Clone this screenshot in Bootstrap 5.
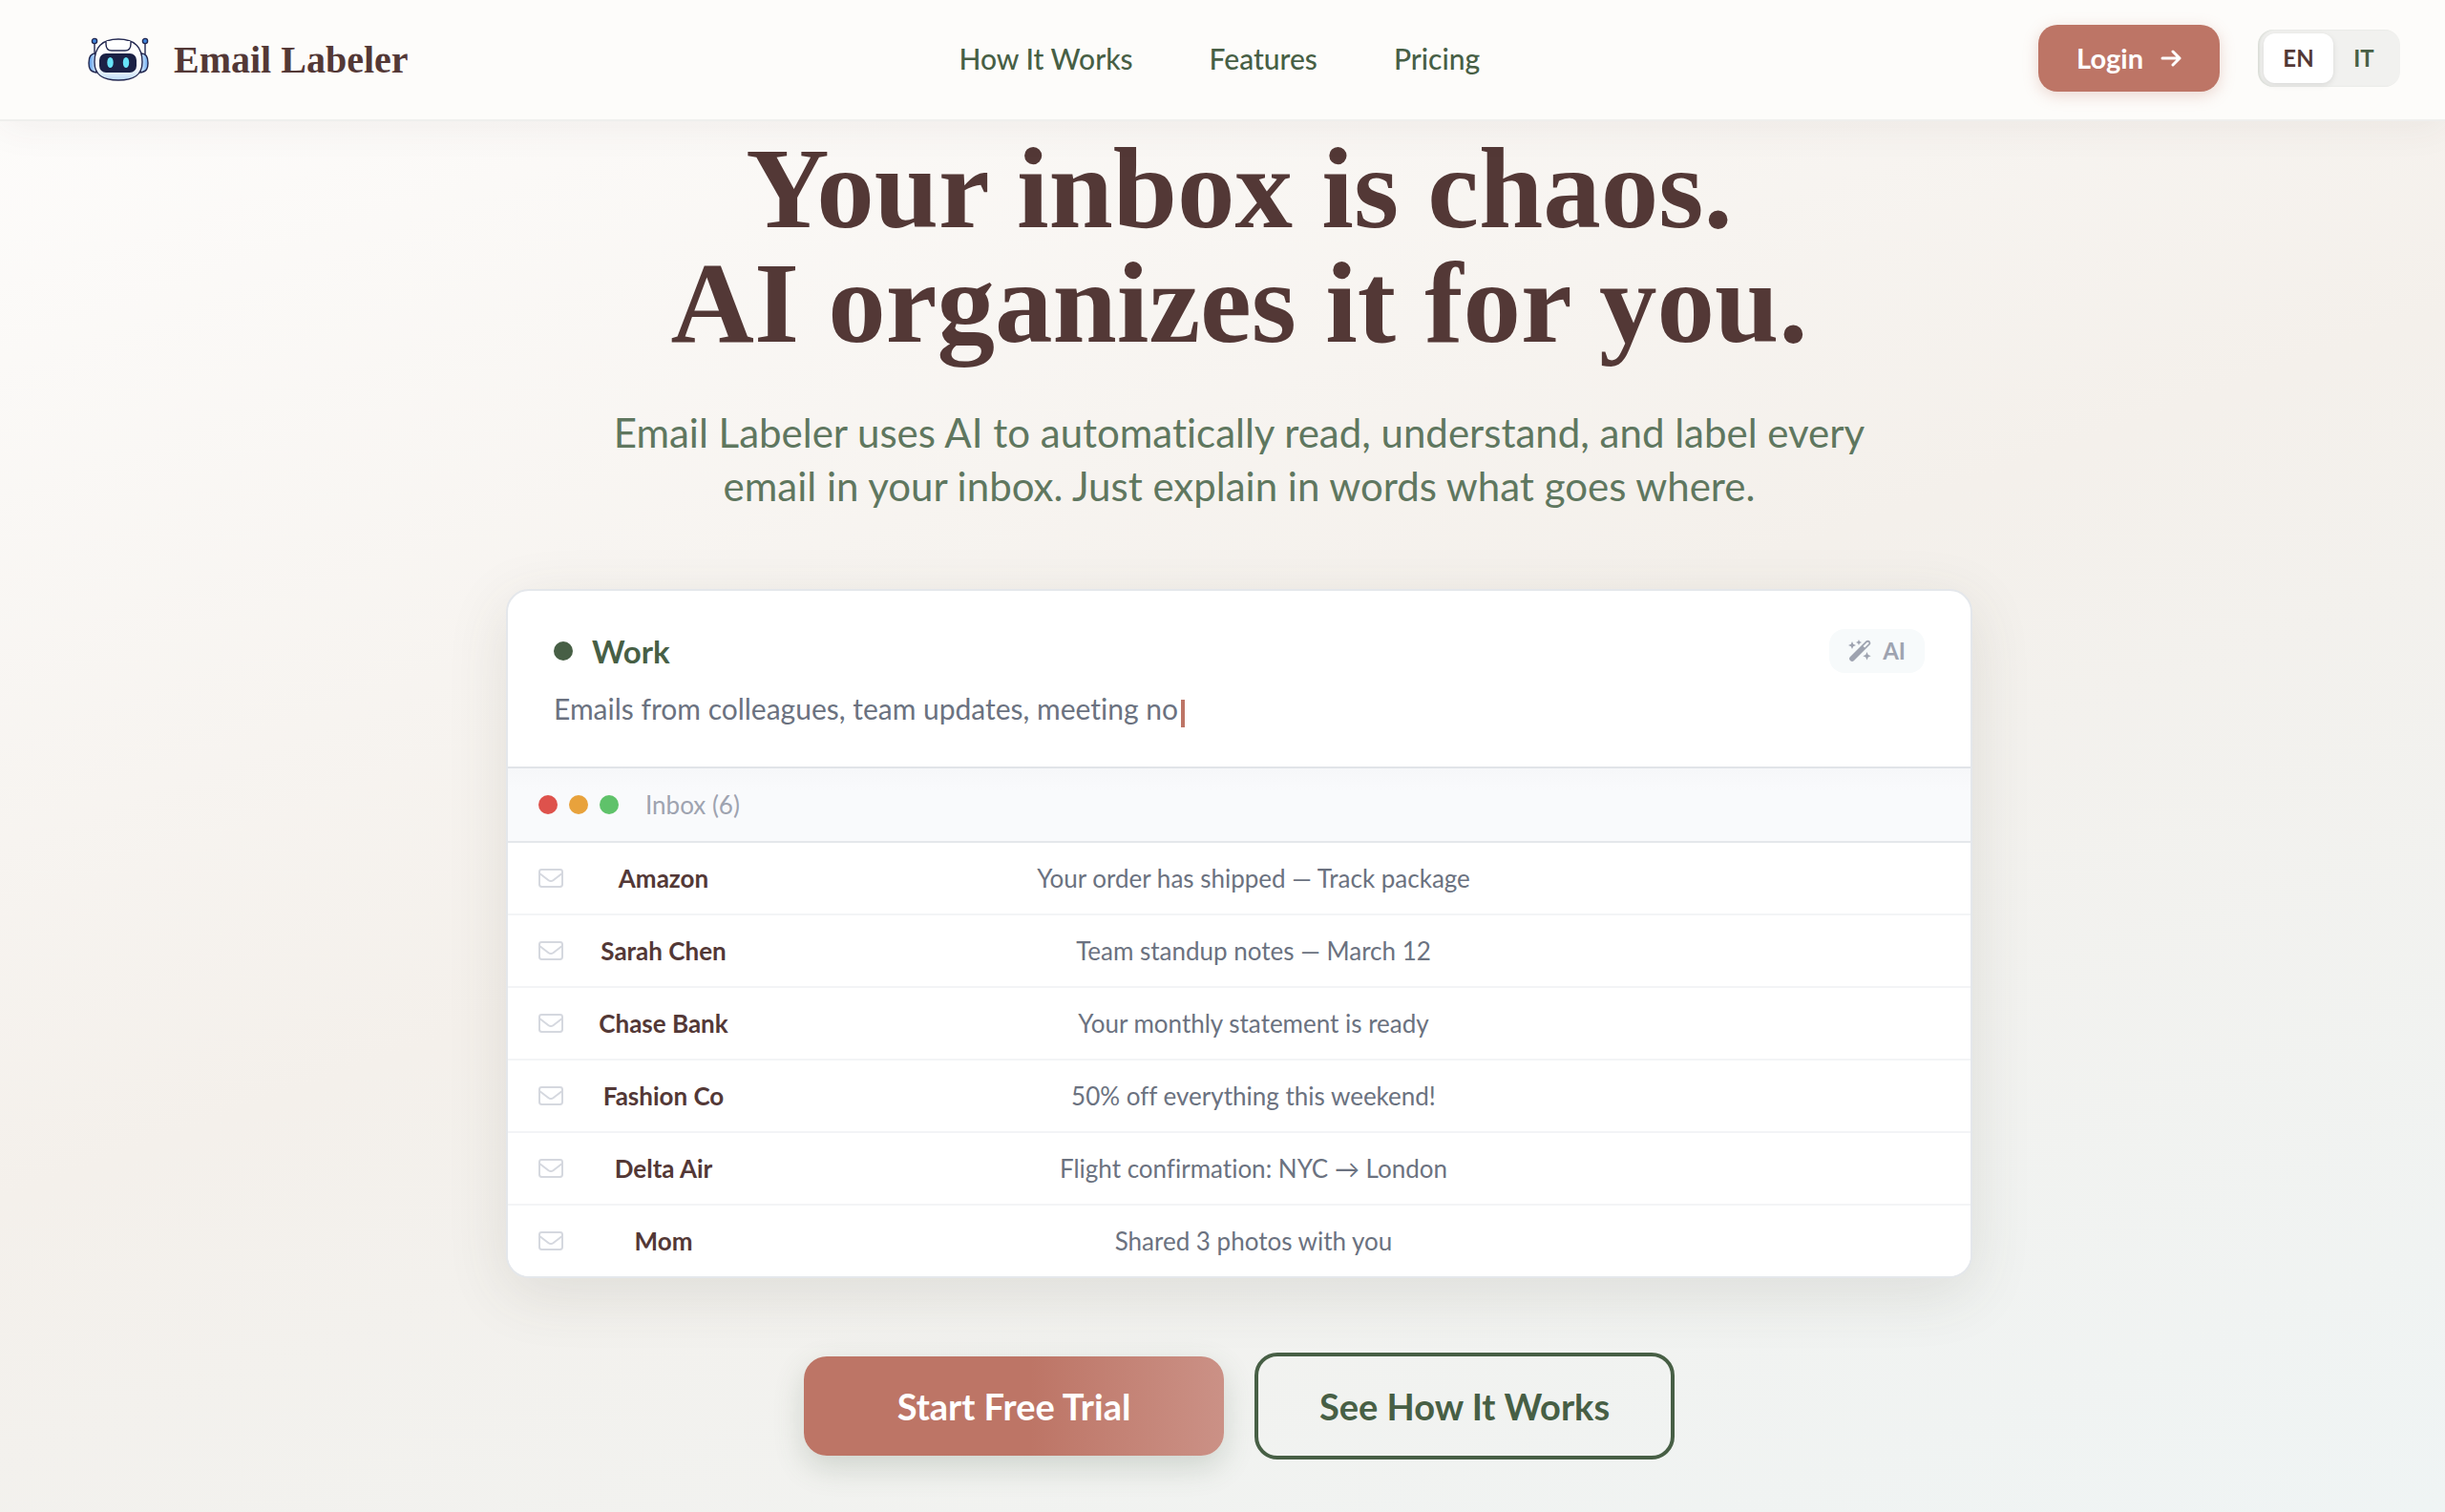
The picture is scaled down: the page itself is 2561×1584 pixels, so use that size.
<!DOCTYPE html>
<html lang="en">
<head>
<meta charset="utf-8">
<meta name="viewport" content="width=device-width, initial-scale=1">
<title>Email Labeler</title>
<link href="https://cdn.jsdelivr.net/npm/bootstrap@5.3.0/dist/css/bootstrap.min.css" rel="stylesheet">
<style>
  :root {
    --brown: #533836;
    --green: #475f45;
    --clay: #bd7566;
    --slate: #6b7280;
    --mist: #9ea3b0;
    --line: #e4e7eb;
  }
  body {
    min-height: 100vh;
    font-family: Lato, "Open Sans", sans-serif;
    font-size: 26px;
    line-height: 30px;
    font-variant-ligatures: no-common-ligatures;
    color: var(--brown);
    background: linear-gradient(160deg, #fefdfc 0%, #f4f0eb 50%, #eff4f4 100%) no-repeat;
  }
  .serif-face { font-family: "Liberation Serif", serif; font-weight: 700; color: var(--brown); }

  .topbar {
    height: 127px;
    padding: 0 47px 4px 92px;
    background: #fdfcfa;
    border-bottom: 2px solid #efefed;
    box-shadow: 0 4px 40px rgba(83, 56, 54, .07);
  }
  .brand-link { gap: 26px; padding-top: 4px; }
  .brand-text { font-size: 40px; line-height: 48px; }
  .main-nav { gap: 80px; }
  .main-nav .nav-link { font-size: 30px; line-height: 36px; color: var(--green); font-weight: 500; padding: 0; }
  .topbar-side { gap: 40px; }
  .btn-login {
    height: 70px; padding: 0 40px; border: 0; border-radius: 20px; gap: 18px;
    color: #fff; background: var(--clay); font-size: 29px; font-weight: 700;
    box-shadow: 0 4px 16px rgba(189, 117, 102, .28);
  }
  .btn-login:hover { color: #fff; background: #b06a5c; }
  .lang-switch { height: 60px; padding: 4px 6px; border-radius: 16px; background: #f1f1ef; box-shadow: inset 2px 0 2px rgba(71, 95, 69, .12); }
  .lang-switch button { height: 52px; border: 0; border-radius: 12px; background: transparent; color: var(--green); font-size: 24px; font-weight: 700; width: 64px; padding: 0; }
  .lang-switch .chosen { width: 73px; background: #fff; color: var(--brown); box-shadow: 0 2px 6px rgba(0, 0, 0, .1); }

  .hero { padding: 10px 0 50px 35px; }
  .hero-title { font-size: 121px; line-height: 120px; }
  .hero-copy { font-size: 42px; line-height: 56px; color: #5f775f; max-width: 1400px; margin-top: 48px; }

  .demo-card {
    width: 1536px; max-width: 100%; margin-top: 80px;
    border: 2px solid var(--line); border-radius: 24px; background: #fff;
    box-shadow: 0 16px 64px rgba(71, 72, 60, .12);
  }
  .rule-head { padding: 40px 48px 38px; }
  .rule-title { gap: 20px; }
  .rule-dot, .win-dot { width: 20px; height: 20px; border-radius: 50%; flex: none; }
  .rule-dot { background: var(--green); }
  .win-close { background: #de524c; }
  .win-min { background: #e8a23c; }
  .win-max { background: #5fc26a; }
  .rule-name { font-size: 33px; line-height: 46px; font-weight: 700; color: var(--green); }
  .ai-chip { height: 46px; padding: 0 20px; gap: 12px; border-radius: 16px; background: #f7fafb; color: var(--mist); font-size: 24px; font-weight: 700; }
  .rule-text { font-size: 30px; line-height: 46px; color: var(--slate); margin-top: 14px; }
  .caret { display: inline-block; width: 4px; height: 29px; margin-left: 3px; vertical-align: -8px; background: var(--clay); }
  .inbox-bar { padding: 23px 32px; gap: 12px; border-top: 2px solid #e1e4e8; border-bottom: 2px solid var(--line); background: linear-gradient(#f6f7f9, #f9fafc 30%); color: var(--mist); }
  .list-group-flush > .mail-row { padding: 22px 32px; gap: 24px; border: 0; border-bottom: 2px solid #f3f4f6; text-align: center; }
  .list-group-flush > .mail-row:last-child { border-bottom: 0; }
  .mail-icon { color: #d5d8df; }
  .mail-from { width: 162px; font-weight: 700; color: var(--brown); }
  .mail-tag { width: 182px; }
  .mail-subject { color: var(--slate); }

  .cta-row { margin-top: 78px; gap: 32px; }
  .btn-cta { width: 440px; border-radius: 24px; font-size: 38px; line-height: 44px; font-weight: 700; padding: 30px 0; }
  .btn-start { border: 0; color: #fff; background: linear-gradient(90deg, #bd7566 54%, #cb9186 100%); box-shadow: 0 12px 32px rgba(71, 95, 69, .2); }
  .btn-start:hover { color: #fff; background: var(--clay); }
  .btn-how { border: 4px solid var(--green); color: var(--green); }
  .btn-how:hover { color: #fff; background: var(--green); }
</style>
</head>
<body>

<svg class="d-none" aria-hidden="true">
  <symbol id="mail" viewBox="0 0 26 20">
    <rect x="1" y="1" width="24" height="18" rx="2.4" fill="none" stroke="currentColor" stroke-width="2"/>
    <path d="M1.500 5.200 10.600 12.200Q13 14 15.400 12.200L24.500 5.200" fill="none" stroke="currentColor" stroke-width="2"/>
  </symbol>
</svg>

<header class="topbar position-relative d-flex align-items-center justify-content-between">
  <a href="#" class="brand-link d-flex align-items-center text-decoration-none">
    <svg width="64" height="47" viewBox="0 0 64 47" aria-hidden="true">
      <defs>
        <linearGradient id="earL" x1="0" x2="1"><stop offset="0" stop-color="#4f96e8"/><stop offset="1" stop-color="#e3f1ff"/></linearGradient>
        <linearGradient id="earR" x1="0" x2="1"><stop offset="0" stop-color="#e3f1ff"/><stop offset="1" stop-color="#6aaaf0"/></linearGradient>
        <linearGradient id="shell" x1="0" y1="0" x2="0" y2="1"><stop offset=".7" stop-color="#fff"/><stop offset="1" stop-color="#b9d8f5"/></linearGradient>
      </defs>
      <g stroke="#232850" stroke-width="1.400">
        <path d="M7 6V18M60 6V18" fill="none"/>
        <circle cx="7" cy="4" r="2.600" fill="#3f86de"/>
        <circle cx="60" cy="4" r="2.600" fill="#3f86de"/>
        <path d="M8 17C2 17 1 22 1 27s1 9 8 10z" fill="url(#earL)"/>
        <path d="M56 17c6 0 7 5 7 10s-1 9-8 10z" fill="url(#earR)"/>
        <path d="M32 2C14 2 7 11 7 26 7 40 16 45 32 45S57 40 57 26C57 11 50 2 32 2z" fill="url(#shell)"/>
        <path d="M19 4v3q0 7 6 7h14q6 0 6-7V4" fill="#fff"/>
      </g>
      <rect x="12" y="17" width="39" height="20" rx="7" fill="#1b2145"/>
      <ellipse cx="23.500" cy="26.500" rx="3.200" ry="5.500" fill="#67e3f7"/>
      <ellipse cx="40" cy="26.500" rx="3.200" ry="5.500" fill="#67e3f7"/>
    </svg>
    <span class="brand-text serif-face">Email Labeler</span>
  </a>
  <nav class="nav main-nav me-2">
    <a class="nav-link" href="#how">How It Works</a>
    <a class="nav-link" href="#features">Features</a>
    <a class="nav-link" href="#pricing">Pricing</a>
  </nav>
  <div class="topbar-side d-flex align-items-center">
    <button type="button" class="btn btn-login d-flex align-items-center">
      Login
      <svg width="22" height="18" viewBox="0 0 22 18" fill="none" stroke="#fff" stroke-width="3" stroke-linecap="round" stroke-linejoin="round" aria-hidden="true"><path d="M2 9H20M13 2l7 7-7 7"/></svg>
    </button>
    <div class="lang-switch d-flex align-items-center" role="group" aria-label="Language">
      <button type="button" class="chosen" aria-pressed="true">EN</button>
      <button type="button" aria-pressed="false">IT</button>
    </div>
  </div>
</header>

<main class="hero d-flex flex-column align-items-center text-center">
  <h1 class="hero-title serif-face m-0">Your inbox is chaos.<br>AI organizes it for you.</h1>
  <p class="hero-copy mb-0">Email Labeler uses AI to automatically read, understand, and label every<br>email in your inbox. Just explain in words what goes where.</p>

  <section class="demo-card overflow-hidden">
    <div class="rule-head text-start">
      <div class="rule-title d-flex align-items-center">
        <span class="rule-dot"></span>
        <h2 class="rule-name mb-0 flex-fill">Work</h2>
        <span class="ai-chip d-inline-flex align-items-center">
          <svg width="24" height="24" viewBox="0 0 24 24" fill="currentColor" aria-hidden="true">
            <path d="M2 22Q0 20 2 18L18.500 1.500Q20.500 0 22.500 1.500 24 3.500 22.500 5.500L6 22Q4 24 2 22z"/>
            <path d="M15.500 7 19.500 3Q20.500 2.300 21.200 3T21.200 4.500L17.200 8.500z" fill="#f7fafb"/>
            <path d="M4 2l1.200 2.800L8 6 5.200 7.200 4 10 2.800 7.200 0 6 2.800 4.800zM11 0l.9 2.100L14 3l-2.100.9L11 6l-.9-2.100L8 3l2.100-.9zM19.500 13l1.300 2.900 2.900 1.300-2.900 1.300-1.300 2.900-1.300-2.900-2.900-1.300 2.900-1.300z"/>
          </svg>
          AI
        </span>
      </div>
      <p class="rule-text mb-0">Emails from colleagues, team updates, meeting no<span class="caret"></span></p>
    </div>
    <div class="inbox-bar d-flex align-items-center">
      <span class="win-dot win-close"></span>
      <span class="win-dot win-min"></span>
      <span class="win-dot win-max"></span>
      <span class="ms-3">Inbox (6)</span>
    </div>
    <ul class="list-group list-group-flush rounded-0" id="mails"></ul>
  </section>

  <div class="cta-row d-flex align-items-center">
    <button type="button" class="btn btn-cta btn-start">Start Free Trial</button>
    <button type="button" class="btn btn-cta btn-how">See How It Works</button>
  </div>
</main>

<script>
  const mails = [
    ["Amazon", "Your order has shipped — Track package"],
    ["Sarah Chen", "Team standup notes — March 12"],
    ["Chase Bank", "Your monthly statement is ready"],
    ["Fashion Co", "50% off everything this weekend!"],
    ["Delta Air", "Flight confirmation: NYC → London"],
    ["Mom", "Shared 3 photos with you"]
  ];
  document.getElementById("mails").innerHTML = mails.map(([from, subject]) => `
    <li class="list-group-item mail-row d-flex align-items-center">
      <svg width="26" height="20" class="mail-icon flex-shrink-0" aria-hidden="true"><use href="#mail"/></svg>
      <span class="mail-from flex-shrink-0">${from}</span>
      <span class="mail-subject flex-fill">${subject}</span>
      <span class="mail-tag flex-shrink-0"></span>
    </li>`).join("");
</script>
<script src="https://cdn.jsdelivr.net/npm/bootstrap@5.3.0/dist/js/bootstrap.bundle.min.js"></script>
</body>
</html>
